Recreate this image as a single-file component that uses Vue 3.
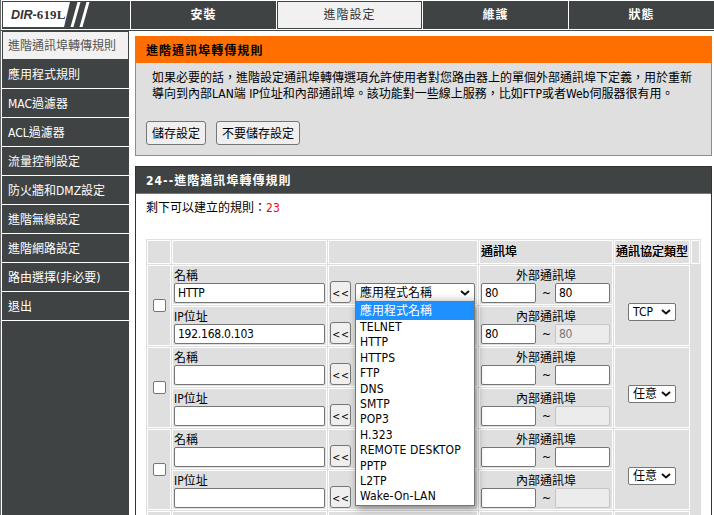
<script setup>
const tabs = [
  { label: '安裝' },
  { label: '進階設定', active: true },
  { label: '維護' },
  { label: '狀態' },
]

const menu = [
  '進階通訊埠轉傳規則',
  '應用程式規則',
  'MAC過濾器',
  'ACL過濾器',
  '流量控制設定',
  '防火牆和DMZ設定',
  '進階無線設定',
  '進階網路設定',
  '路由選擇(非必要)',
  '退出',
]

const apps = [
  'TELNET', 'HTTP', 'HTTPS', 'FTP', 'DNS', 'SMTP', 'POP3',
  'H.323', 'REMOTE DESKTOP', 'PPTP', 'L2TP', 'Wake-On-LAN',
]

const rules = [
  { name: 'HTTP', ip: '192.168.0.103', port: '80', proto: 'TCP', open: true },
  { name: '', ip: '', port: '', proto: '任意' },
  { name: '', ip: '', port: '', proto: '任意' },
]
</script>

<template>
  <div class="page">
    <header class="top">
      <div class="logo">
        <svg class="logo-shape" width="127" height="28" viewBox="0 0 127 28">
          <polygon points="0,1 67,1 61,26 0,26" fill="#fff" />
          <polygon points="74.5,1 77.5,1 70.5,26 67.5,26" fill="#fff" />
          <polygon points="83.5,1 86.5,1 79.5,26 76.5,26" fill="#fff" />
        </svg>
        <span class="model"><i>DIR</i>-<b>619L</b></span>
      </div>
      <div v-for="t in tabs" :key="t.label" class="tab" :class="{ active: t.active }">{{ t.label }}</div>
    </header>

    <div class="body">
      <nav class="side">
        <div v-for="(m, i) in menu" :key="m" class="item" :class="{ active: i === 0 }">{{ m }}</div>
      </nav>

      <main class="main">
        <section class="panel intro">
          <h1 class="title">進階通訊埠轉傳規則</h1>
          <p class="desc">如果必要的話，進階設定通訊埠轉傳選項允許使用者對您路由器上的單個外部通訊埠下定義，用於重新<br>導向到內部LAN端 IP位址和內部通訊埠。該功能對一些線上服務，比如FTP或者Web伺服器很有用。</p>
          <div class="actions">
            <button class="btn">儲存設定</button>
            <button class="btn">不要儲存設定</button>
          </div>
        </section>

        <section class="panel rules">
          <h2 class="title">24--進階通訊埠轉傳規則</h2>
          <p class="left">剩下可以建立的規則：<span class="count">23</span></p>

          <div class="grid">
            <div class="cell head"></div>
            <div class="cell head"></div>
            <div class="cell head"></div>
            <div class="cell head">通訊埠</div>
            <div class="cell head">通訊協定類型</div>
            <div class="cell head"></div>

            <template v-for="(r, i) in rules" :key="i">
              <div class="cell tall check"><span class="box"></span></div>
              <div class="cell field c2">
                <label>名稱</label>
                <div class="input">{{ r.name }}</div>
              </div>
              <div class="cell pick c3">
                <button class="copy">&lt;&lt;</button>
                <div v-if="r.open" class="select wide">
                  <span>應用程式名稱</span>
                  <svg class="arrow" width="10" height="6" viewBox="0 0 10 6"><path d="M1 1L5 4.5L9 1" /></svg>
                  <div class="menu">
                    <div class="opt on">應用程式名稱</div>
                    <div v-for="a in apps" :key="a" class="opt">{{ a }}</div>
                  </div>
                </div>
              </div>
              <div class="cell ports c4">
                <label>外部通訊埠</label>
                <div class="pair">
                  <div class="input">{{ r.port }}</div>
                  <span class="tilde">~</span>
                  <div class="input">{{ r.port }}</div>
                </div>
              </div>
              <div class="cell tall proto">
                <div class="select small">
                  <span>{{ r.proto }}</span>
                  <svg class="arrow" width="10" height="6" viewBox="0 0 10 6"><path d="M1 1L5 4.5L9 1" /></svg>
                </div>
              </div>
              <div class="cell field c2">
                <label>IP位址</label>
                <div class="input">{{ r.ip }}</div>
              </div>
              <div class="cell pick c3">
                <button class="copy">&lt;&lt;</button>
              </div>
              <div class="cell ports c4">
                <label>內部通訊埠</label>
                <div class="pair">
                  <div class="input">{{ r.port }}</div>
                  <span class="tilde">~</span>
                  <div class="input off">{{ r.port }}</div>
                </div>
              </div>
            </template>
            <div class="cell check"></div>
            <div class="cell c2"></div>
            <div class="cell c3"></div>
            <div class="cell c4"></div>
            <div class="cell proto"></div>
          </div>
        </section>
      </main>
    </div>
  </div>
</template>

<style>
html, body { margin: 0; overflow: hidden; background: #fff; }
</style>

<style scoped>
* { box-sizing: border-box; }
.page {
  width: 714px;
  height: 515px;
  overflow: hidden;
  border-left: 1px solid #6b6b6b;
  padding-top: 1px;
  font: 12px/16px "DejaVu Sans Condensed", "Noto Sans", "Noto Sans CJK TC", sans-serif;
  color: #000;
}
.top {
  display: grid;
  grid-template-columns: 128px repeat(4, 145px);
  column-gap: 1px;
  height: 30px;
  padding-left: 1px;
  border-bottom: 1px solid #404343;
}
.logo { position: relative; height: 28px; padding-left: 1px; background: #404343; }
.logo-shape { display: block; }
.model {
  position: absolute;
  left: 9px;
  top: 5px;
  font: bold 12.5px/18px "Liberation Sans", sans-serif;
  white-space: nowrap;
  color: #333;
}
.model b { font: bold 13px/18px "Liberation Serif", serif; letter-spacing: 0.2px; }
.tab {
  height: 28px;
  line-height: 29px;
  text-align: center;
  letter-spacing: 1px;
  font-weight: bold;
  color: #fff;
  background: #404343;
}
.tab.active {
  border: 1px solid #404343;
  line-height: 27px;
  font-weight: normal;
  color: #333;
  background: #f1f1f1;
}
.body { display: flex; height: 484px; }
.side {
  flex: none;
  width: 127px;
  margin-left: 1px;
  background: #404343;
}
.item {
  height: 29px;
  padding-left: 6px;
  line-height: 30px;
  white-space: nowrap;
  color: #fff;
  border-bottom: 1px solid #fff;
}
.item.active {
  padding-left: 5px;
  line-height: 28px;
  color: #555;
  background: #f1f1f1;
  border: 1px solid #404343;
}
.main { flex: none; width: 577px; margin: 5px 0 0 6px; }
.panel { border: 1px solid #ff6f00; }
.intro { height: 120px; background: #dfdfdf; }
.title {
  margin: 0;
  height: 26px;
  padding-left: 10px;
  font-size: 12px;
  line-height: 28px;
  letter-spacing: 1.05px;
  background: #ff6f00;
}
.desc { margin: 7px 0 0 16px; white-space: nowrap; }
.actions { display: flex; gap: 10px; margin: 19px 0 0 10px; }
.btn {
  height: 24px;
  padding: 0 5px;
  font: inherit;
  line-height: 24px;
  color: #000;
  background: #efefef;
  border: 1px solid #767676;
  border-radius: 3px;
}
.rules { height: 400px; margin-top: 10px; border-color: #333; }
.rules .title { height: 27px; color: #fff; background: #404343; border-bottom: 1px solid #777; }
.left { margin: 6px 0 0 10px; }
.count { color: #f00; }
.grid {
  display: grid;
  grid-template-columns: 24px 155px 150px 134px 76px 9px;
  grid-template-rows: 24px;
  grid-auto-rows: 40px;
  gap: 1px;
  width: 555px;
  margin: 23px 0 0 10px;
  padding: 1px;
  background: #dfdfdf;
}
.cell { border: 1px solid #fff; white-space: nowrap; }
.head { line-height: 22px; padding-left: 1px; overflow: hidden; text-shadow: 0 0 0.3px #000; }
.tall { grid-row: span 2; display: flex; align-items: center; justify-content: center; }
.check { grid-column: 1; }
.c2 { grid-column: 2; }
.c3 { grid-column: 3; }
.c4 { grid-column: 4; }
.proto { grid-column: 5; padding-top: 13px; }
.box { width: 13px; height: 13px; background: #fff; border: 1px solid #767676; border-radius: 2px; }
.field { padding: 1px; }
label { display: block; height: 16px; line-height: 18px; }
.input {
  width: 151px;
  height: 20px;
  padding-left: 3px;
  line-height: 19px;
  letter-spacing: -0.25px;
  background: #fff;
  border: 1px solid #767676;
  border-radius: 2px;
}
.pick { display: flex; align-items: flex-start; padding: 15px 0 0 1px; }
.copy {
  width: 21px;
  height: 22px;
  padding: 1px 0 0 1px;
  font: inherit;
  font-size: 10.5px;
  letter-spacing: 0.8px;
  color: #000;
  background: #efefef;
  border: 1px solid #767676;
  border-radius: 3px;
}
.select {
  position: relative;
  display: flex;
  align-items: center;
  justify-content: space-between;
  height: 18px;
  padding: 0 4px;
  background: #fff;
  border: 1px solid #767676;
  border-radius: 2px;
}
.arrow path { fill: none; stroke: #111; stroke-width: 2; }
.wide { width: 120px; height: 19px; margin: 2px 0 0 4px; background: linear-gradient(#fff 50%, #eee); }
.small { width: 48px; }
.menu {
  position: absolute;
  z-index: 2;
  left: -1px;
  top: 17px;
  width: 120px;
  height: 205px;
  background: #fff;
  border: 1px solid #767676;
  box-shadow: 2px 3px 8px rgba(0, 0, 0, 0.4);
}
.opt { height: 15.4px; padding-left: 4px; line-height: 15.4px; letter-spacing: 0.15px; }
.opt.on { height: 18px; line-height: 18px; letter-spacing: 0; color: #fff; background: #1e90ff; }
.pair { display: flex; align-items: center; }
.ports { padding: 1px; }
.ports label { text-align: center; }
.pair .input { width: 55px; }
.tilde { width: 19px; padding-left: 6px; }
.pair .off { color: #777; background: #ececec; border-color: #c5c5c5; }
</style>
